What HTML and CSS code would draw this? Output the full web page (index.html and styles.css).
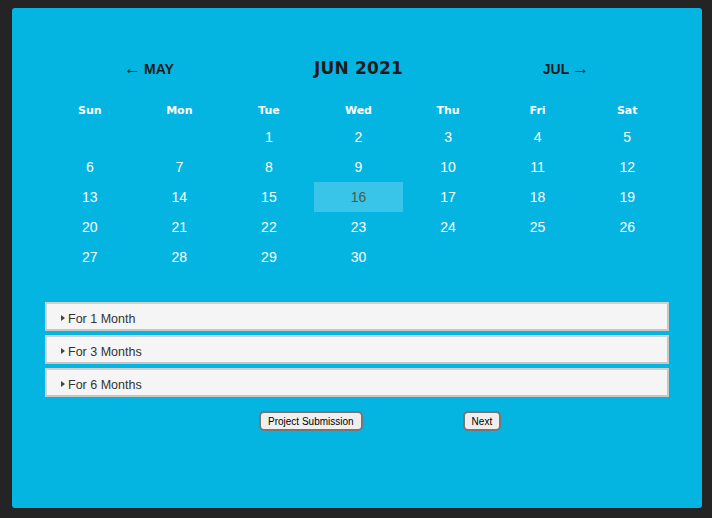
FILE: index.html
```html
<!DOCTYPE html>
<html>
<head>
<meta charset="utf-8">
<link rel="stylesheet" href="styles.css">
</head>
<body>
<div class="panel">
  <div class="content">
    <div class="months">
      <div class="month side"><span class="arrow">&larr;</span>MAY</div>
      <div class="month current">JUN 2021</div>
      <div class="month side">JUL<span class="arrow">&rarr;</span></div>
    </div>
    <table class="cal">
      <thead>
        <tr><th>Sun</th><th>Mon</th><th>Tue</th><th>Wed</th><th>Thu</th><th>Fri</th><th>Sat</th></tr>
      </thead>
      <tbody>
        <tr><td></td><td></td><td>1</td><td>2</td><td>3</td><td>4</td><td>5</td></tr>
        <tr><td>6</td><td>7</td><td>8</td><td>9</td><td>10</td><td>11</td><td>12</td></tr>
        <tr><td>13</td><td>14</td><td>15</td><td class="today">16</td><td>17</td><td>18</td><td>19</td></tr>
        <tr><td>20</td><td>21</td><td>22</td><td>23</td><td>24</td><td>25</td><td>26</td></tr>
        <tr><td>27</td><td>28</td><td>29</td><td>30</td><td></td><td></td><td></td></tr>
      </tbody>
    </table>
    <div class="plans">
      <details class="plan"><summary>For 1 Month</summary></details>
      <details class="plan"><summary>For 3 Months</summary></details>
      <details class="plan"><summary>For 6 Months</summary></details>
    </div>
    <div class="actions">
      <button class="btn">Project Submission</button>
      <button class="btn">Next</button>
    </div>
  </div>
</div>
</body>
</html>
```
FILE: styles.css
```css
html, body {
  margin: 0;
  padding: 0;
  background: #242424;
}
body {
  padding: 8px 10px 10px 12px;
  font-family: "Liberation Sans", Arial, sans-serif;
}
.panel {
  width: 690px;
  height: 500px;
  background: #05b5e1;
  border-radius: 3px;
  box-sizing: border-box;
  padding-top: 50px;
}
.content {
  width: 627px;
  margin-left: 33px;
}
.months {
  display: grid;
  grid-template-columns: repeat(3, 1fr);
  align-items: center;
  height: 22px;
  color: #1c1c1c;
}
.month {
  text-align: center;
}
.month.side {
  font-weight: bold;
  font-size: 14px;
}
.month.side:first-child {
  padding-right: 4px;
}
.month.current {
  font-family: "DejaVu Sans", sans-serif;
  font-weight: bold;
  font-size: 17px;
  letter-spacing: 0.2px;
  margin-top: -3px;
}
.arrow {
  font-weight: normal;
  font-size: 17px;
  margin: 0 3px;
}
.cal {
  width: 627px;
  border-collapse: collapse;
  table-layout: fixed;
  margin-top: 23px;
}
.cal th {
  font-family: "DejaVu Sans", sans-serif;
  font-size: 11px;
  font-weight: bold;
  color: #fff;
  height: 14px;
  padding: 0 0 5px;
}
.cal td {
  height: 30px;
  padding: 0;
  text-align: center;
  font-size: 14px;
  color: #fff;
}
.cal td.today {
  background: #38c5e9;
  color: #4f5a4a;
}
.plans {
  margin-top: 30px;
  width: 624px;
  display: flex;
  flex-direction: column;
  gap: 4px;
}
.plan {
  background: #f5f5f5;
  border: 2px solid #c6c6c6;
  border-top-color: #d0d0d0;
  border-left-color: #d0d0d0;
}
.plan summary {
  list-style: none;
  height: 25px;
  display: flex;
  align-items: center;
  padding-left: 14px;
  font-size: 12.5px;
  color: #333;
  padding-top: 4px;
  box-sizing: border-box;
}
.plan summary::-webkit-details-marker {
  display: none;
}
.plan summary::before {
  content: "";
  width: 0;
  height: 0;
  border-top: 3px solid transparent;
  border-bottom: 3px solid transparent;
  border-left: 4px solid #444;
  margin-right: 3px;
  margin-top: -2px;
}
.actions {
  display: flex;
  gap: 100px;
  margin-top: 14px;
  padding-left: 214px;
}
.btn {
  font-family: "Liberation Sans", Arial, sans-serif;
  font-size: 10px;
  color: #000;
  background: #efefef;
  border: 2px solid #767676;
  border-radius: 5px;
  height: 20px;
  padding: 0 7px;
  line-height: 13px;
}
```
